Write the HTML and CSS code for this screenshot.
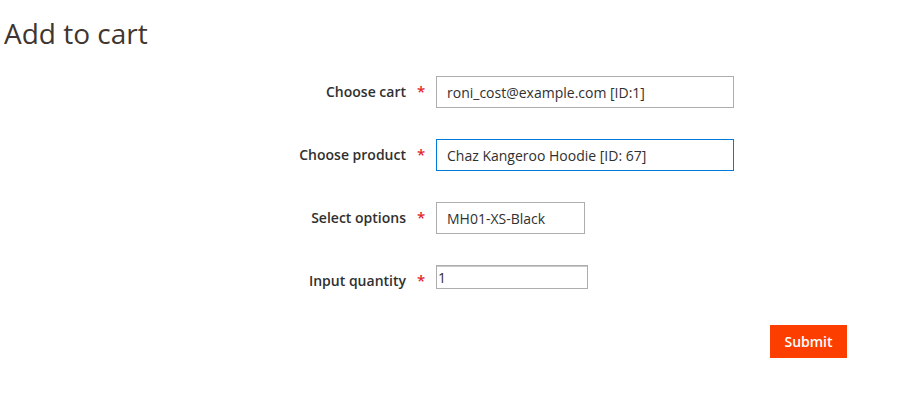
FILE: index.html
```html
<!DOCTYPE html>
<html lang="en">
<head>
    <meta charset="UTF-8">
    <meta name="viewport" content="width=device-width, initial-scale=1.0">
    <title>Add to cart</title>
    <link rel="stylesheet" href="styles.css">
</head>
<body>

    <div class="page">
        <h1 class="page-title">Add to cart</h1>

        <form class="cart-form" onsubmit="return false;">
            <!-- Cart -->
            <div class="field">
                <label class="label" for="cart">Choose cart</label>
                <span class="required">*</span>
                <div class="control">
                    <input type="text" id="cart" class="input input-wide" value="roni_cost@example.com [ID:1]">
                </div>
            </div>

            <!-- Product -->
            <div class="field">
                <label class="label" for="product">Choose product</label>
                <span class="required">*</span>
                <div class="control">
                    <input type="text" id="product" class="input input-wide focused" value="Chaz Kangeroo Hoodie [ID: 67]">
                </div>
            </div>

            <!-- Options -->
            <div class="field">
                <label class="label" for="options">Select options</label>
                <span class="required">*</span>
                <div class="control">
                    <input type="text" id="options" class="input input-short" value="MH01-XS-Black">
                </div>
            </div>

            <!-- Quantity -->
            <div class="field">
                <label class="label" for="qty">Input quantity</label>
                <span class="required">*</span>
                <div class="control">
                    <input type="text" id="qty" class="input-qty" value="1">
                </div>
            </div>

            <div class="actions">
                <button type="submit" class="btn-primary">Submit</button>
            </div>
        </form>
    </div>

</body>
</html>
```

FILE: styles.css
```css
body {
    margin: 0;
    font-family: "Open Sans", "Liberation Sans", Arial, sans-serif;
    color: #303030;
    background: #fff;
}

.page {
    padding: 0 4px;
}

.page-title {
    margin: 15px 0 0;
    font-size: 28px;
    font-weight: 400;
    line-height: 36px;
    color: #41362f;
}

.cart-form {
    margin-top: 25px;
    display: flex;
    flex-direction: column;
    gap: 31px;
}

.field {
    display: flex;
    align-items: flex-start;
    height: 32px;
}

.label {
    width: 402px;
    text-align: right;
    font-size: 14px;
    font-weight: 600;
    line-height: 32px;
    color: #303030;
}

.required {
    width: 30px;
    text-align: center;
    font-size: 15px;
    font-weight: 600;
    line-height: 30px;
    color: #e22626;
}

.input {
    box-sizing: border-box;
    height: 32px;
    padding: 0 10px;
    border: 1px solid #adadad;
    border-radius: 0;
    font-family: inherit;
    font-size: 14px;
    color: #303030;
    outline: none;
}

.input-wide {
    width: 298px;
}

.input-short {
    width: 149px;
}

.focused {
    border-color: #007bdb;
}

.input-qty {
    box-sizing: border-box;
    width: 152px;
    height: 24px;
    padding: 0 1px;
    border: 1px solid #adadad;
    box-shadow: inset 0 1px 0 #c8c8c8;
    font-family: inherit;
    font-size: 14px;
    color: #303030;
    outline: none;
}

.actions {
    display: flex;
    justify-content: flex-end;
    margin-top: -3px;
    padding-right: 53px;
}

.btn-primary {
    height: 33px;
    width: 77px;
    padding: 0;
    border: none;
    border-radius: 0;
    background-color: #fc3f00;
    color: #fff;
    font-family: inherit;
    font-size: 14px;
    font-weight: 600;
    cursor: pointer;
}

.btn-primary:hover {
    background-color: #e03500;
}
```
